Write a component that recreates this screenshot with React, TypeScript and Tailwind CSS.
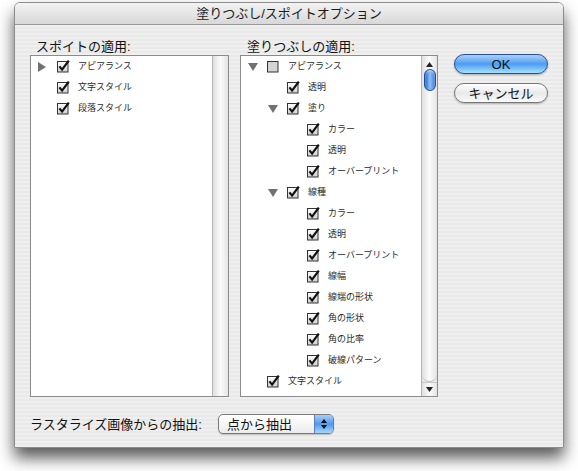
import React from 'react';

type Item = { level: number; tri?: 'down' | 'right'; state: 'on' | 'mixed'; label: string };

const leftItems: Item[] = [
  { level: 0, tri: 'right', state: 'on', label: 'アピアランス' },
  { level: 0, state: 'on', label: '文字スタイル' },
  { level: 0, state: 'on', label: '段落スタイル' },
];

const rightItems: Item[] = [
  { level: 0, tri: 'down', state: 'mixed', label: 'アピアランス' },
  { level: 1, state: 'on', label: '透明' },
  { level: 1, tri: 'down', state: 'on', label: '塗り' },
  { level: 2, state: 'on', label: 'カラー' },
  { level: 2, state: 'on', label: '透明' },
  { level: 2, state: 'on', label: 'オーバープリント' },
  { level: 1, tri: 'down', state: 'on', label: '線種' },
  { level: 2, state: 'on', label: 'カラー' },
  { level: 2, state: 'on', label: '透明' },
  { level: 2, state: 'on', label: 'オーバープリント' },
  { level: 2, state: 'on', label: '線幅' },
  { level: 2, state: 'on', label: '線端の形状' },
  { level: 2, state: 'on', label: '角の形状' },
  { level: 2, state: 'on', label: '角の比率' },
  { level: 2, state: 'on', label: '破線パターン' },
  { level: 0, state: 'on', label: '文字スタイル' },
];

const pads = ['pl-[7px]', 'pl-[27px]', 'pl-[47px]'];

function Triangle({ dir }: { dir: 'down' | 'right' }) {
  return dir === 'down' ? (
    <svg width="10" height="8" viewBox="0 0 10 8">
      <polygon points="0,0 10,0 5,8" fill="#717171" />
    </svg>
  ) : (
    <svg width="8" height="10" viewBox="0 0 8 10">
      <polygon points="0,0 8,5 0,10" fill="#717171" />
    </svg>
  );
}

function Check({ state }: { state: 'on' | 'mixed' }) {
  return (
    <svg width="13" height="13" viewBox="0 0 13 13" className="shrink-0">
      <defs>
        <linearGradient id="cb" x1="0" y1="0" x2="0" y2="1">
          <stop offset="0" stopColor="#ffffff" />
          <stop offset="1" stopColor="#cfcfcf" />
        </linearGradient>
      </defs>
      <rect
        x="0.5"
        y="1.5"
        width="10.5"
        height="10.5"
        fill={state === 'mixed' ? '#d4d4d4' : 'url(#cb)'}
        stroke="#333"
        strokeWidth="1"
      />
      {state === 'on' && (
        <path d="M2.4 6.4 L5.1 9.6 L11.8 0.6" fill="none" stroke="#111" strokeWidth="2.2" strokeLinejoin="miter" />
      )}
    </svg>
  );
}

function Row({ item }: { item: Item }) {
  return (
    <div className={`flex h-[21px] items-center ${pads[item.level]}`}>
      <span className="flex w-[19px] items-center">{item.tri && <Triangle dir={item.tri} />}</span>
      <Check state={item.state} />
      <span className="ml-[8px] text-[9px] leading-none text-[#2a2a2a]">{item.label}</span>
    </div>
  );
}

function ListBox({ items, scroll, width }: { items: Item[]; scroll: boolean; width: string }) {
  return (
    <div className={`flex h-[342px] ${width} border border-[#8b8b8b] bg-white`}>
      <div className="flex-1">
        {items.map((it, i) => (
          <Row key={i} item={it} />
        ))}
      </div>
      <div className="flex w-[16px] flex-col border-l border-[#b5b5b5] bg-gradient-to-r from-[#e0e0e0] via-[#fbfbfb] to-[#e4e4e4]">
        {scroll && (
          <>
            <div className="flex h-[13px] items-end justify-center pb-[2px]">
              <svg width="7" height="5" viewBox="0 0 7 5">
                <polygon points="0,5 7,5 3.5,0" fill="#222" />
              </svg>
            </div>
            <div className="mx-auto h-[22px] w-[12px] rounded-full border border-[#1f4f9e] bg-gradient-to-r from-[#2a62c9] via-[#8fc0f7] to-[#3d7ad9] shadow-[inset_0_1px_2px_rgba(255,255,255,0.6)]" />
            <div className="flex-1" />
            <div className="h-[8px] rounded-b-full border-b border-[#bdbdbd]" />
            <div className="flex h-[14px] items-center justify-center border-t border-[#c8c8c8]">
              <svg width="7" height="5" viewBox="0 0 7 5">
                <polygon points="0,0 7,0 3.5,5" fill="#222" />
              </svg>
            </div>
          </>
        )}
      </div>
    </div>
  );
}

export default function App() {
  return (
    <div className="h-[471px] w-[578px] bg-white pl-[14px] pt-[2px] font-['Liberation_Sans','Noto_Sans_CJK_JP',sans-serif]">
      <div className="w-[550px] overflow-hidden rounded-t-[6px] border border-[#8c8c8c] shadow-[0_10px_16px_rgba(0,0,0,0.65)]">
        {/* title bar */}
        <div className="flex h-[22px] items-center justify-center border-b border-[#9a9a9a] bg-gradient-to-b from-[#f3f3f3] to-[#d8d8d8] text-[13px] leading-none text-[#1a1a1a]">
          塗りつぶし/スポイトオプション
        </div>

        {/* body */}
        <div className="bg-[repeating-linear-gradient(#efefef_0px,#efefef_2px,#e9e9e9_2px,#e9e9e9_4px)] px-[15px] pb-[13px] pt-[13px]">
          <div className="flex">
            <div className="flex flex-col">
              <div className="h-[17px] pl-[6px] text-[13px] leading-[17px] text-[#111]">スポイトの適用:</div>
              <ListBox items={leftItems} scroll={false} width="w-[199px]" />
            </div>
            <div className="ml-[11px] flex flex-col">
              <div className="h-[17px] pl-[7px] text-[13px] leading-[17px] text-[#111]">塗りつぶしの適用:</div>
              <ListBox items={rightItems} scroll width="w-[198px]" />
            </div>
            <div className="ml-[16px] flex flex-col gap-[9px] pt-[16px]">
              <button className="h-[20px] w-[94px] rounded-full border border-[#2c4f8e] bg-gradient-to-b from-[#a9d2fb] via-[#4c9cf0] to-[#a6e0ff] text-[13px] leading-none text-[#111] shadow-[0_1px_2px_rgba(0,0,0,0.3)]">
                OK
              </button>
              <button className="h-[20px] w-[94px] rounded-full border border-[#777] bg-gradient-to-b from-[#ffffff] via-[#e9e9e9] to-[#fafafa] text-[13px] leading-none text-[#111] shadow-[0_1px_2px_rgba(0,0,0,0.25)]">
                キャンセル
              </button>
            </div>
          </div>

          <div className="mt-[17px] flex h-[20px] items-center">
            <span className="text-[13px] leading-none text-[#111]">ラスタライズ画像からの抽出:</span>
            <div className="ml-[16px] flex h-[20px] w-[116px] overflow-hidden rounded-[5px] border border-[#7a7a7a] bg-gradient-to-b from-white to-[#ececec] shadow-[0_1px_1px_rgba(0,0,0,0.2)]">
              <span className="flex flex-1 items-center pl-[8px] text-[13px] leading-none text-[#111]">点から抽出</span>
              <span className="flex w-[19px] flex-col items-center justify-center gap-[2px] border-l border-[#5a7fb8] bg-gradient-to-b from-[#a6cff7] via-[#4f98ea] to-[#a5d8fb]">
                <svg width="6" height="4" viewBox="0 0 6 4">
                  <polygon points="0,4 6,4 3,0" fill="#111" />
                </svg>
                <svg width="6" height="4" viewBox="0 0 6 4">
                  <polygon points="0,0 6,0 3,4" fill="#111" />
                </svg>
              </span>
            </div>
          </div>
        </div>
      </div>
    </div>
  );
}
